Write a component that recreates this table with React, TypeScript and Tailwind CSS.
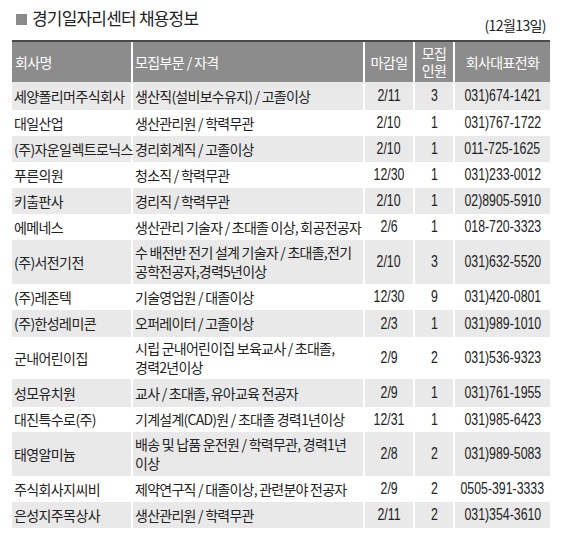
import React from "react";

type Row = { c: string; j: React.ReactNode; d: string; n: string; t: string; h: number };

const rows: Row[] = [
  { c: "세양폴리머주식회사", j: "생산직(설비보수유지) / 고졸이상", d: "2/11", n: "3", t: "031)674-1421", h: 28 },
  { c: "대일산업", j: "생산관리원 / 학력무관", d: "2/10", n: "1", t: "031)767-1722", h: 26 },
  { c: "(주)자운일렉트로닉스", j: "경리회계직 / 고졸이상", d: "2/10", n: "1", t: "011-725-1625", h: 26 },
  { c: "푸른의원", j: "청소직 / 학력무관", d: "12/30", n: "1", t: "031)233-0012", h: 26 },
  { c: "키출판사", j: "경리직 / 학력무관", d: "2/10", n: "1", t: "02)8905-5910", h: 26 },
  { c: "에메네스", j: "생산관리 기술자 / 초대졸 이상, 회공전공자", d: "2/6", n: "1", t: "018-720-3323", h: 26 },
  {
    c: "(주)서전기전",
    j: (
      <>
        수 배전반 전기 설계 기술자 / 초대졸,전기
        <br />
        공학전공자,경력5년이상
      </>
    ),
    d: "2/10",
    n: "3",
    t: "031)632-5520",
    h: 44,
  },
  { c: "(주)레존텍", j: "기술영업원 / 대졸이상", d: "12/30", n: "9", t: "031)420-0801", h: 26 },
  { c: "(주)한성레미콘", j: "오퍼레이터 / 고졸이상", d: "2/3", n: "1", t: "031)989-1010", h: 27 },
  {
    c: "군내어린이집",
    j: (
      <>
        시립 군내어린이집 보육교사 / 초대졸,
        <br />
        경력2년이상
      </>
    ),
    d: "2/9",
    n: "2",
    t: "031)536-9323",
    h: 42,
  },
  { c: "성모유치원", j: "교사 / 초대졸, 유아교육 전공자", d: "2/9", n: "1", t: "031)761-1955", h: 28 },
  { c: "대진특수로(주)", j: "기계설계(CAD)원 / 초대졸 경력1년이상", d: "12/31", n: "1", t: "031)985-6423", h: 25 },
  {
    c: "태영알미늄",
    j: (
      <>
        배송 및 납품 운전원 / 학력무관, 경력1년
        <br />
        이상
      </>
    ),
    d: "2/8",
    n: "2",
    t: "031)989-5083",
    h: 44,
  },
  { c: "주식회사지씨비", j: "제약연구직 / 대졸이상, 관련분야 전공자", d: "2/9", n: "2", t: "0505-391-3333", h: 26 },
  { c: "은성지주목상사", j: "생산관리원 / 학력무관", d: "2/11", n: "2", t: "031)354-3610", h: 26 },
];

const kr = "font-['Noto_Sans_CJK_KR',sans-serif]";

function Num({ v }: { v: string }) {
  return (
    <span className="inline-block whitespace-nowrap scale-x-[0.77] font-['Liberation_Sans',sans-serif] text-[16px] leading-[18px] text-[#222]">
      {v}
    </span>
  );
}

export default function App() {
  return (
    <div className={`w-[568px] h-[546px] bg-white text-[#222] ${kr}`}>
      <div className="h-[40px] flex justify-between pl-[16px] pr-[22px]">
        <div className="pt-[6px] flex items-center h-[30px] gap-[5px]">
          <span className="block w-[11px] h-[11px] bg-[#8a8a8a] mt-[2px]" />
          <span className="text-[17px] tracking-[-0.8px] text-[#222]">경기일자리센터 채용정보</span>
        </div>
        <div className="pt-[16px] text-[14px] tracking-[-0.6px] leading-[18px]">(12월13일)</div>
      </div>
      <div className="ml-[12px] w-[538px]">
        <div className="border-t-2 border-[#4a4a4a] flex gap-[2px] bg-white h-[42px] text-white text-[14px] tracking-[-0.6px]">
          <div className="w-[119px] bg-[#8c8c8c] flex items-center pl-[3px]">회사명</div>
          <div className="w-[230px] bg-[#8c8c8c] flex items-center pl-[2px]">모집부문 / 자격</div>
          <div className="w-[48px] bg-[#8c8c8c] flex items-center justify-center">마감일</div>
          <div className="w-[38px] bg-[#8c8c8c] flex items-center justify-center">
            <div className="text-center leading-[17px]">
              모집
              <br />
              인원
            </div>
          </div>
          <div className="w-[95px] bg-[#8c8c8c] flex items-center justify-center">회사대표전화</div>
        </div>
        {rows.map((r, i) => {
          const bg = i % 2 === 0 ? "bg-[#e9e9e9]" : "bg-white";
          return (
            <div key={i} className="flex gap-[2px] bg-white" style={{ height: r.h }}>
              <div className={`w-[119px] ${bg} flex items-center pl-[2px] text-[14px] tracking-[-0.6px] whitespace-nowrap`}>
                {r.c}
              </div>
              <div className={`w-[230px] ${bg} flex items-center pl-[2px] text-[14px] tracking-[-0.75px] leading-[19px] whitespace-nowrap`}>
                <div>{r.j}</div>
              </div>
              <div className={`w-[48px] ${bg} flex items-center justify-center`}>
                <Num v={r.d} />
              </div>
              <div className={`w-[38px] ${bg} flex items-center justify-center`}>
                <Num v={r.n} />
              </div>
              <div className={`w-[95px] ${bg} flex items-center justify-center overflow-visible`}>
                <Num v={r.t} />
              </div>
            </div>
          );
        })}
      </div>
    </div>
  );
}
